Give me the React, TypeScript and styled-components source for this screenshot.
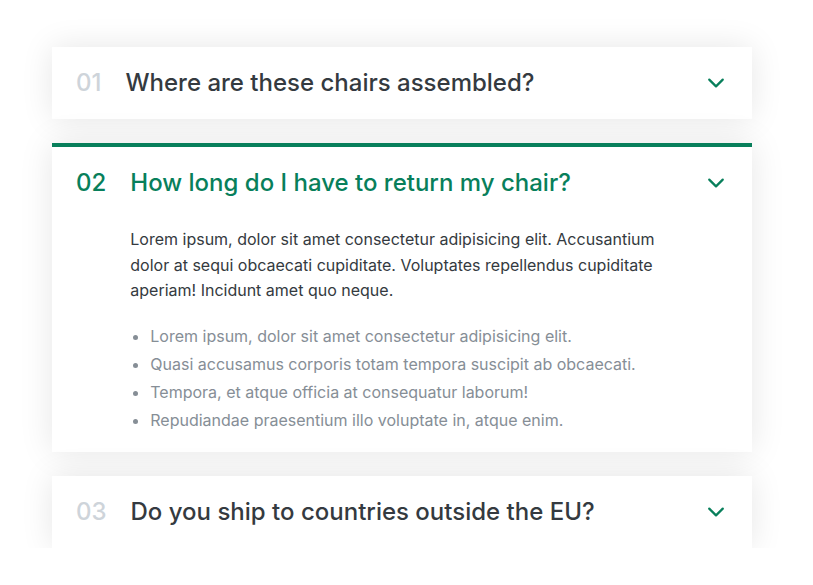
import React, { useState } from "react";
import styled, { createGlobalStyle, css } from "styled-components";

const Global = createGlobalStyle`
  * { margin: 0; padding: 0; box-sizing: border-box; }
  html, body { background: #fff; }
  body {
    font-family: Inter, "Noto Sans", sans-serif;
    line-height: 1;
    color: #343a40;
  }
`;

const Accordion = styled.div`
  width: 700px;
  margin: 47px 0 0 52px;
  display: flex;
  flex-direction: column;
  gap: 24px;
`;

const Item = styled.div<{ $open: boolean }>`
  box-shadow: 0 0 32px rgba(0, 0, 0, 0.1);
  padding: 24px;
  display: grid;
  grid-template-columns: auto 1fr auto;
  column-gap: 24px;
  row-gap: 32px;
  align-items: center;
  cursor: pointer;
  background: #fff;
  ${(p) =>
    p.$open &&
    css`
      border-top: 4px solid #087f5b;
    `}
`;

const Number = styled.p<{ $open: boolean }>`
  font-size: 24px;
  font-weight: 500;
  color: ${(p) => (p.$open ? "#087f5b" : "#ced4da")};
`;

const Title = styled.p<{ $open: boolean }>`
  font-size: 24px;
  font-weight: 500;
  color: ${(p) => (p.$open ? "#087f5b" : "#343a40")};
`;

const Icon = styled.svg`
  width: 24px;
  height: 24px;
  display: block;
`;

const HiddenBox = styled.div`
  grid-column: 2 / -1;
`;

const Para = styled.p`
  font-size: 16px;
  line-height: 1.6;
  margin-bottom: 24px;
  max-width: 560px;
  color: #343a40;
`;

const List = styled.ul`
  color: #868e96;
  margin-left: 20px;
  display: flex;
  flex-direction: column;
  gap: 12px;
  font-size: 16px;
`;

const Chevron = () => (
  <Icon viewBox="0 0 512 512">
    <path
      d="M112 184l144 144 144-144"
      fill="none"
      stroke="#087f5b"
      strokeLinecap="round"
      strokeLinejoin="round"
      strokeWidth={48}
    />
  </Icon>
);

const faqs = [
  { num: "01", title: "Where are these chairs assembled?" },
  { num: "02", title: "How long do I have to return my chair?" },
  { num: "03", title: "Do you ship to countries outside the EU?" },
];

export default function App() {
  const [open, setOpen] = useState<number | null>(1);
  return (
    <>
      <Global />
      <Accordion>
        {faqs.map((f, i) => {
          const isOpen = open === i;
          return (
            <Item key={f.num} $open={isOpen} onClick={() => setOpen(isOpen ? null : i)}>
              <Number $open={isOpen}>{f.num}</Number>
              <Title $open={isOpen}>{f.title}</Title>
              <Chevron />
              {isOpen && (
                <HiddenBox>
                  <Para>
                    Lorem ipsum, dolor sit amet consectetur adipisicing elit. Accusantium dolor at
                    sequi obcaecati cupiditate. Voluptates repellendus cupiditate aperiam! Incidunt
                    amet quo neque.
                  </Para>
                  <List>
                    <li>Lorem ipsum, dolor sit amet consectetur adipisicing elit.</li>
                    <li>Quasi accusamus corporis totam tempora suscipit ab obcaecati.</li>
                    <li>Tempora, et atque officia at consequatur laborum!</li>
                    <li>Repudiandae praesentium illo voluptate in, atque enim.</li>
                  </List>
                </HiddenBox>
              )}
            </Item>
          );
        })}
      </Accordion>
    </>
  );
}
